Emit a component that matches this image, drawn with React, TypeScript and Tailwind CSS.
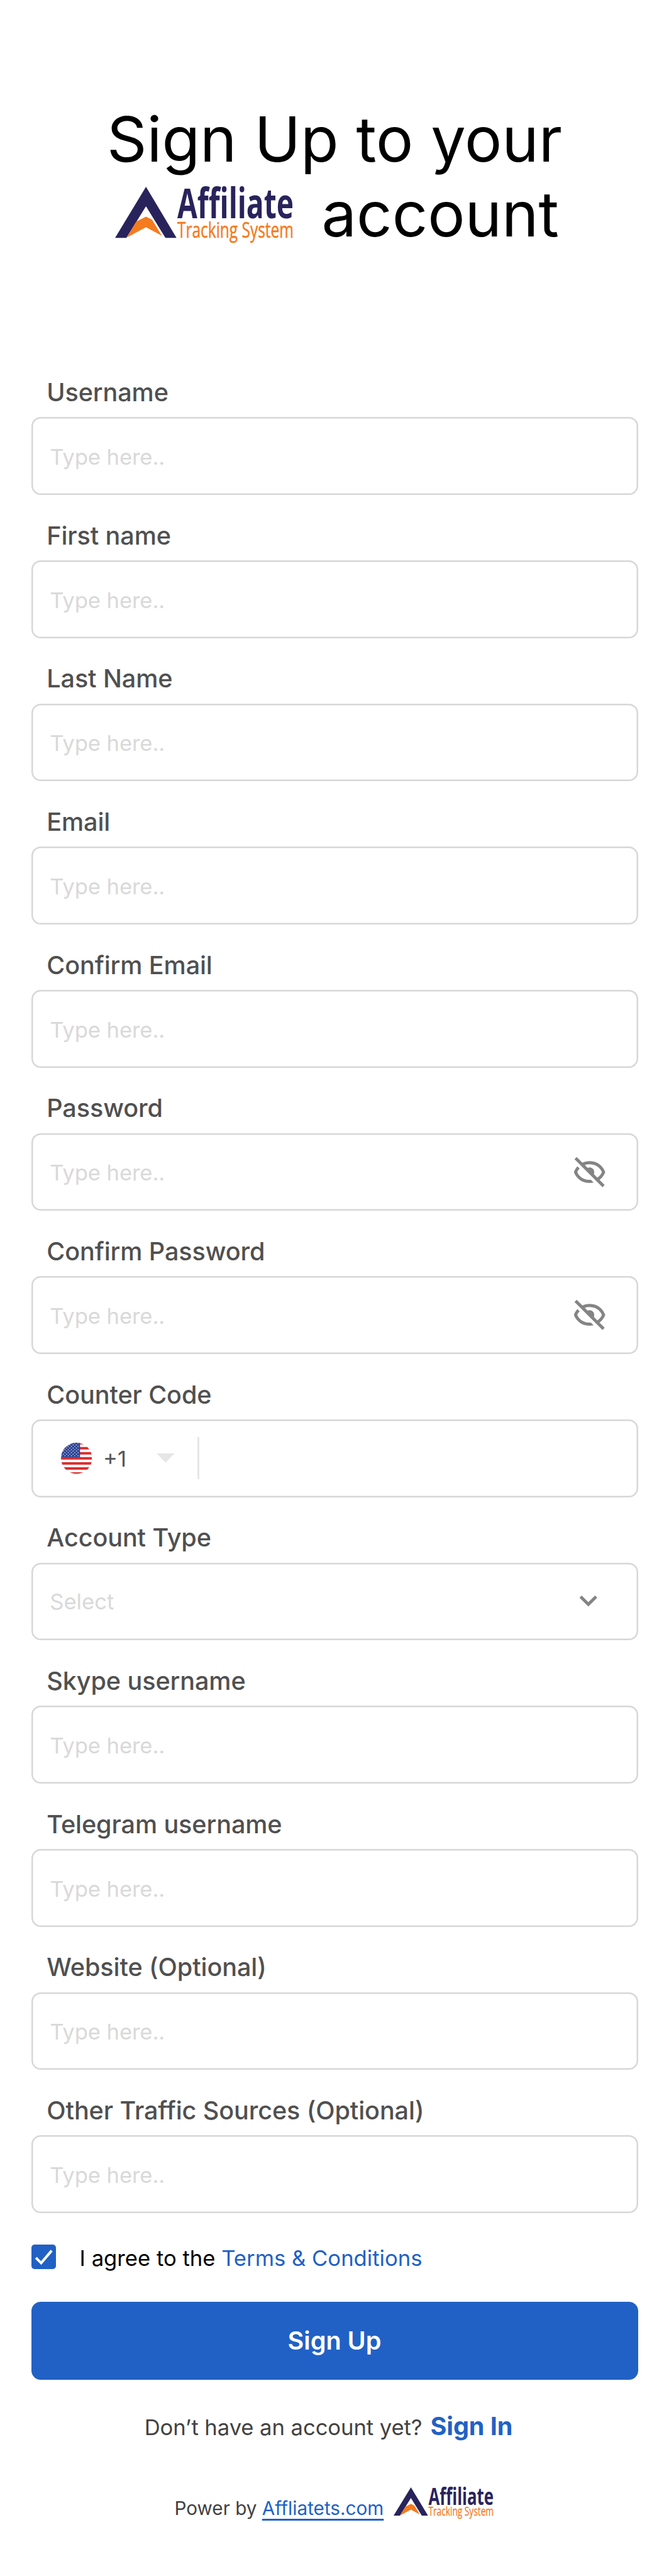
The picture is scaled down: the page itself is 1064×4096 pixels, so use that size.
import React from "react";
import { BiHide, BiChevronDown } from "react-icons/bi";

const BOX =
  "flex h-[123.74px] w-full items-center rounded-[14.85px] bg-white shadow-[inset_0_0_0_2.47px_#d7d7d7]";

function Logo({ className }: { className: string }) {
  return (
    <svg viewBox="0 0 458 146" className={className} overflow="visible" role="img" aria-label="Affiliate Tracking System" preserveAspectRatio="none">
      <polygon points="79.5,0 158,131.5 129.5,131.5 79.5,50 29,131.5 0,131.5" fill="#29235c" />
      <path d="M79.5 77 L95 84.5 L120.5 126 L79.5 104 L30 130.5 L54.5 89.5 Z" fill="#f47b20" />
      <g fontFamily="'Open Sans', 'Noto Sans', sans-serif" style={{ fontVariantLigatures: "none" }}>
        <text x="160" y="80.5" fontSize="108" fontWeight="700" fill="#29235c" textLength="299" lengthAdjust="spacingAndGlyphs">
          Affiliate
        </text>
        <text x="160" y="130.5" fontSize="56.5" fontWeight="400" fill="#f47b20" stroke="#f47b20" strokeWidth="0.8" textLength="299" lengthAdjust="spacingAndGlyphs">
          Tracking System
        </text>
      </g>
    </svg>
  );
}

function UsFlag() {
  return (
    <svg viewBox="0 0 80 80" className="h-[49.5px] w-[49.5px]">
      <defs>
        <clipPath id="flag-circle">
          <circle cx="40" cy="40" r="40" />
        </clipPath>
      </defs>
      <g clipPath="url(#flag-circle)">
        <rect width="80" height="80" fill="#fff" />
        {[-2, 11, 24, 37, 50, 63, 76].map((y) => (
          <rect key={y} y={y} width="80" height="6.4" fill="#dc2d2f" />
        ))}
        <rect width="49" height="37.3" fill="#2f4696" />
        {Array.from({ length: 9 }, (_, row) =>
          Array.from({ length: 6 }, (_, col) => (
            <circle key={`${row}-${col}`} cx={(row % 2 ? 6 : 1.8) + col * 8.4} cy={1.6 + row * 4} r="1.2" fill="#fff" opacity={row % 2 && col === 5 ? 0 : 1} />
          )),
        )}
      </g>
    </svg>
  );
}

function Field({ label, children }: { label: string; children: React.ReactNode }) {
  return (
    <div>
      <label className="mb-[11.15px] block pl-[24.75px] text-[39.6px] font-medium leading-[56px] tracking-[-0.1px] text-[#505050]">{label}</label>
      {children}
    </div>
  );
}

function TextBox({ secret = false }: { secret?: boolean }) {
  return (
    <div className={BOX}>
      <input
        placeholder="Type here.."
        className="h-full min-w-0 flex-1 bg-transparent pt-[2px] pl-[29.7px] text-[34.65px] tracking-[-0.1px] outline-none placeholder:text-[#d9d9d9] placeholder:opacity-100"
      />
      {secret && <BiHide className="mr-[47px] h-[59.4px] w-[59.4px] text-[#848484]" />}
    </div>
  );
}

export default function App() {
  return (
    <main className="h-[4096px] w-[1064px] overflow-hidden bg-white px-[49.5px] pt-[162px] font-['Inter',sans-serif]">
      <h1 className="h-[434.1px] text-[99px] font-normal leading-[118.75px] text-black">
        <span className="block text-center">Sign Up to your</span>
        <span className="flex pl-[133.6px]">
          <Logo className="mt-[16.7px] h-[90.3px] w-[283.4px] shrink-0" />
          <span className="ml-[45px]">account</span>
        </span>
      </h1>

      <form className="flex flex-col gap-[36.8px]">
        <Field label="Username"><TextBox /></Field>
        <Field label="First name"><TextBox /></Field>
        <Field label="Last Name"><TextBox /></Field>
        <Field label="Email"><TextBox /></Field>
        <Field label="Confirm Email"><TextBox /></Field>
        <Field label="Password"><TextBox secret /></Field>
        <Field label="Confirm Password"><TextBox secret /></Field>
        <Field label="Counter Code">
          <div className={BOX}>
            <div className="ml-[47px]"><UsFlag /></div>
            <span className="ml-[18px] w-[59.4px] text-[34.65px] leading-[48px] text-[#565656]">+1</span>
            <svg viewBox="0 0 46 24" className="ml-[25.5px] h-[14.8px] w-[28.7px]">
              <path d="M0 0h46L23 24z" fill="#e6e6e6" />
            </svg>
            <span className="ml-[36.6px] h-[66.8px] w-[2.47px] bg-[#e6e6e6]" />
          </div>
        </Field>
        <Field label="Account Type">
          <div className={BOX}>
            <span className="flex-1 pt-[2px] pl-[29.7px] text-[34.65px] text-[#d9d9d9]">Select</span>
            <BiChevronDown className="mr-[49px] mb-[6px] h-[59.4px] w-[59.4px] text-[#848484]" />
          </div>
        </Field>
        <Field label="Skype username"><TextBox /></Field>
        <Field label="Telegram username"><TextBox /></Field>
        <Field label="Website (Optional)"><TextBox /></Field>
        <Field label="Other Traffic Sources (Optional)"><TextBox /></Field>
      </form>

      <div className="mt-[49.5px] flex h-[39.6px] items-center">
        <span className="flex h-[39.6px] w-[39.6px] items-center justify-center rounded-[5px] bg-[#2161c5]">
          <svg viewBox="0 0 64 64" className="h-full w-full">
            <path d="M11.5 34 L25 47.5 L52 15.5" fill="none" stroke="#fff" strokeWidth="6.5" />
          </svg>
        </span>
        <span className="ml-[37.5px] pt-[3px] text-[34.65px] leading-[42px] text-black">
          I agree to the <span className="text-[#2161c5]">Terms &amp; Conditions</span>
        </span>
      </div>

      <button className="mt-[52px] block h-[123.74px] w-full rounded-[14.85px] bg-[#2161c5] text-[39.6px] font-semibold leading-[48px] text-white">
        Sign Up
      </button>

      <p className="mt-[50.5px] flex h-[48px] items-baseline justify-center pr-[19px] text-[34.65px] leading-[48px] tracking-[-0.08px] text-[#424242]">
        Don’t have an account yet?
        <a className="ml-[13px] text-[39.6px] font-bold text-[#2161c5]">Sign In</a>
      </p>

      <footer className="mt-[81.9px] flex h-[48px] pl-[228px] text-[29.7px] leading-[48px] text-[#424242]">
        <span>
          Power by{" "}
          <a className="text-[#2161c5] underline decoration-[2.5px] underline-offset-[5.5px] [text-decoration-skip-ink:none]">Affliatets.com</a>
        </span>
        <Logo className="-mt-[9.2px] ml-[16px] h-[50px] w-[158.7px] shrink-0" />
      </footer>
    </main>
  );
}
